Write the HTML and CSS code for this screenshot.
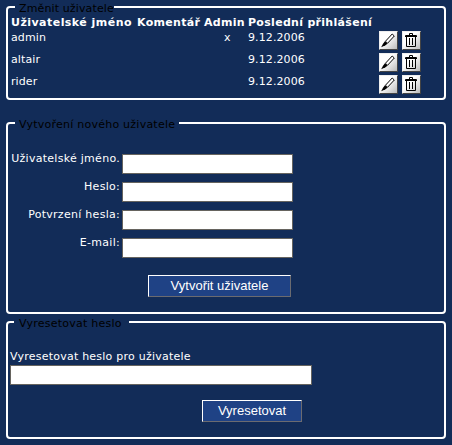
FILE: index.html
```
<!DOCTYPE html>
<html lang="cs">
<head>
<meta charset="utf-8">
<title>Uživatelé</title>
<link rel="stylesheet" href="styles.css">
</head>
<body>
<svg class="defs" width="0" height="0">
  <symbol id="pencil" viewBox="0 0 19 19">
    <path d="M6.5 10.2 13.2 3 15.3 5 8.5 12.3Z" fill="#fff" stroke="#000" stroke-width="1"/>
    <path d="M6 10.2 8.5 12.7 6.5 14.2 2.2 16.3 4 12.8Z" fill="#000"/>
  </symbol>
  <symbol id="trash" viewBox="0 0 19 19">
    <path d="M3.5 6V4.5H14.5V6M7.5 4V2.5H10.5V4M3 5.5H15M4.5 6V15.5H13.5V6M7.5 7V14M10.5 7V14" fill="none" stroke="#000" stroke-width="1"/>
  </symbol>
</svg>
<fieldset class="users">
  <legend>Změnit uživatele</legend>
  <div class="row head"><b class="wide">Uživatelské jméno</b><b>Komentář</b><b>Admin</b><b>Poslední přihlášení</b></div>
  <div class="row"><span>admin</span><span></span><span class="mark">x</span><span>9.12.2006</span><button class="icon"><svg><use href="#pencil"/></svg></button><button class="icon"><svg><use href="#trash"/></svg></button></div>
  <div class="row"><span>altair</span><span></span><span></span><span>9.12.2006</span><button class="icon"><svg><use href="#pencil"/></svg></button><button class="icon"><svg><use href="#trash"/></svg></button></div>
  <div class="row"><span>rider</span><span></span><span></span><span>9.12.2006</span><button class="icon"><svg><use href="#pencil"/></svg></button><button class="icon"><svg><use href="#trash"/></svg></button></div>
</fieldset>
<fieldset class="create">
  <legend>Vytvoření nového uživatele</legend>
  <div class="form">
    <label for="name">Uživatelské jméno.</label><input id="name">
    <label for="pass">Heslo:</label><input id="pass" type="password">
    <label for="pass2">Potvrzení hesla:</label><input id="pass2" type="password">
    <label for="mail">E-mail:</label><input id="mail">
  </div>
  <button class="submit">Vytvořit uživatele</button>
</fieldset>
<fieldset class="reset">
  <legend>Vyresetovat heslo</legend>
  <label for="who">Vyresetovat heslo pro uživatele</label>
  <input id="who">
  <button class="submit">Vyresetovat</button>
</fieldset>
</body>
</html>
```
FILE: styles.css
```
* { box-sizing: border-box; }
body {
  margin: 0;
  padding: 0 6px;
  height: 445px;
  overflow: hidden;
  background: #122c58;
  color: #fff;
  font: 11px/14px Verdana, "DejaVu Sans", sans-serif;
}
.defs { display: block; }
fieldset {
  margin: 0;
  padding: 0 3px;
  border: 2px solid #fff;
  border-radius: 4px;
  min-width: 0;
}
legend {
  height: 14px;
  margin-left: 4px;
  padding: 2px 0 0 4px;
  color: #000;
  letter-spacing: .24px;
  white-space: nowrap;
}
.users { height: 100px; }
.users legend { width: 99px; letter-spacing: .13px; }
.create { height: 198px; margin-top: 16px; }
.create legend { width: 164px; }
.reset { height: 124px; margin-top: 1px; padding: 0 2px; }
.reset legend { width: 115px; padding-left: 5px; }
.row {
  display: grid;
  grid-template-columns: 126px 67px 44px 131px 23px 20px;
  height: 22px;
  line-height: 17px;
  letter-spacing: .1px;
  white-space: nowrap;
}
.head { height: 15px; line-height: 17px; letter-spacing: .3px; }
.wide { letter-spacing: .46px; }
.mark { padding-left: 20px; }
.icon {
  width: 19px;
  height: 19px;
  margin-top: 2px;
  padding: 0;
  border: 1px solid #555;
  border-color: #eee #444 #444 #eee;
  background: linear-gradient(135deg, #fff 40%, #bbb);
}
.icon svg { display: block; width: 19px; height: 19px; margin: -1px; }
.form {
  display: grid;
  grid-template-columns: 109px 171px;
  grid-auto-rows: 20px;
  gap: 8px 2px;
  padding-top: 24px;
}
.form label { margin-top: -2px; text-align: right; letter-spacing: .28px; white-space: nowrap; }
input {
  display: block;
  height: 20px;
  width: 100%;
  padding: 0 2px;
  border: 1px solid #66645f;
  border-radius: 0;
  background: #fff;
}
.submit {
  display: block;
  height: 22px;
  padding: 0;
  border: 1px solid;
  border-color: #fff #6b6b70 #6b6b70 #fff;
  background: #1f4285;
  color: #fff;
  font: 13px/18px Arial, "Liberation Sans", sans-serif;
}
.create .submit { width: 143px; margin: 17px 0 0 137px; }
.reset label { display: block; padding-top: 21px; height: 36px; letter-spacing: .23px; }
.reset input { width: 302px; }
.reset .submit { width: 100px; margin: 15px 0 0 192px; }
```
